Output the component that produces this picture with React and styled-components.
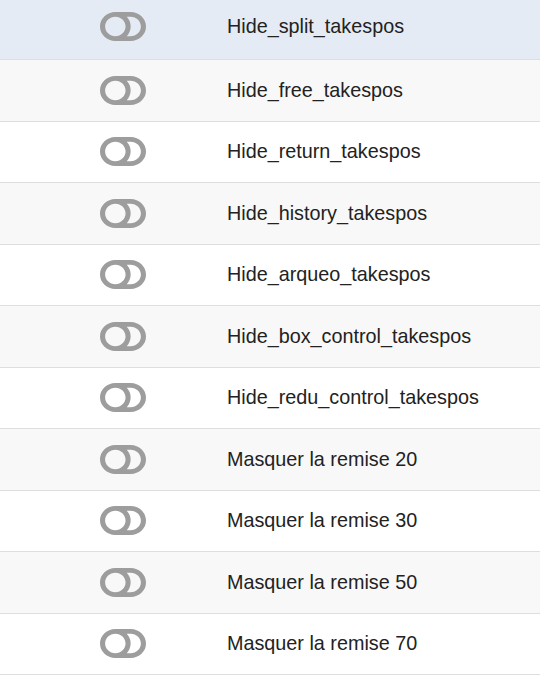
import styled, { createGlobalStyle } from "styled-components"

const GlobalStyle = createGlobalStyle`
  html, body {
    margin: 0;
    padding: 0;
    background: #fff;
    overflow: hidden;
  }
  body {
    font-family: "Liberation Sans", Arial, sans-serif;
  }
`

const List = styled.div`
  margin-top: -6.5px;
  width: 540px;
`

const Row = styled.div`
  display: grid;
  grid-template-columns: 219px 1fr;
  align-items: center;
  height: ${(props) => (props.highlight ? "66.5px" : "61.5px")};
  box-sizing: border-box;
  border-bottom: 1px solid #dedede;
  background: ${(props) => (props.highlight ? "#e5ebf4" : props.odd ? "#f8f8f8" : "#ffffff")};
`

const ToggleCell = styled.div`
  display: flex;
  justify-content: center;
  align-items: center;
  padding-left: 27px;
`

const Label = styled.div`
  padding-left: 8px;
  font-size: 19.8px;
  color: #222;
  white-space: nowrap;
`

const ToggleIcon = styled.svg`
  width: 46px;
  height: 29px;
  display: block;
  fill: #9d9d9d;
  cursor: pointer;
`

function ToggleOff() {
  return (
    <ToggleIcon viewBox="0 64 576 384" preserveAspectRatio="none">
      <path
        fillRule="evenodd"
        d="M384 64H192C85.961 64 0 149.961 0 256s85.961 192 192 192h192c106.039 0 192-85.961 192-192S490.039 64 384 64zM64 256c0-70.741 57.249-128 128-128 70.741 0 128 57.249 128 128 0 70.741-57.249 128-128 128-70.741 0-128-57.249-128-128zm320 128h-48.905c65.217-72.858 65.236-183.12 0-256H384c70.741 0 128 57.249 128 128 0 70.74-57.249 128-128 128z"
      />
    </ToggleIcon>
  )
}

const options = [
  "Hide_split_takespos",
  "Hide_free_takespos",
  "Hide_return_takespos",
  "Hide_history_takespos",
  "Hide_arqueo_takespos",
  "Hide_box_control_takespos",
  "Hide_redu_control_takespos",
  "Masquer la remise 20",
  "Masquer la remise 30",
  "Masquer la remise 50",
  "Masquer la remise 70",
]

function App() {
  return (
    <>
      <GlobalStyle />
      <List>
        {options.map((label, index) => (
          <Row key={label} highlight={index === 0} odd={index % 2 === 1}>
            <ToggleCell>
              <ToggleOff />
            </ToggleCell>
            <Label>{label}</Label>
          </Row>
        ))}
      </List>
    </>
  )
}

export default App
